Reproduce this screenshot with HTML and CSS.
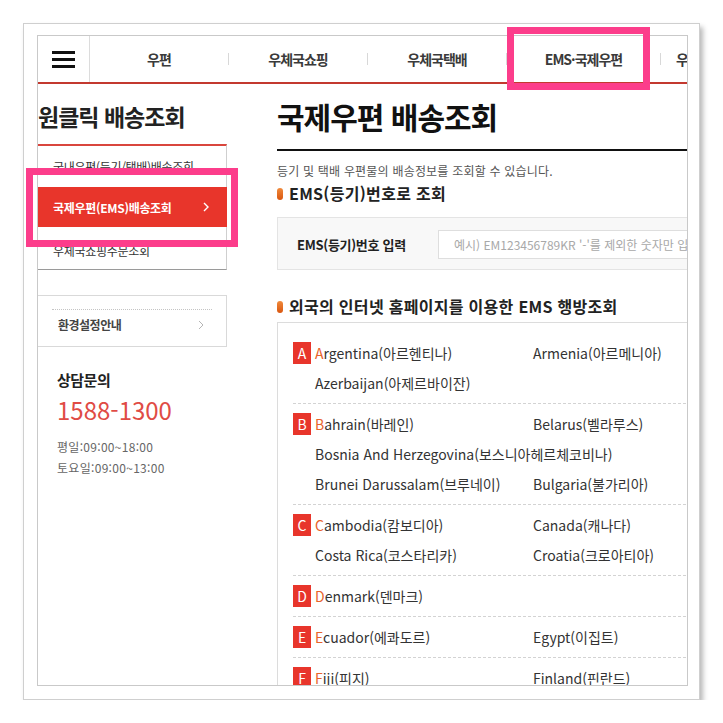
FILE: index.html
```html
<!DOCTYPE html>
<html lang="ko">
<head>
    <meta charset="UTF-8">
    <meta name="viewport" content="width=device-width, initial-scale=1.0">
    <title>국제우편 배송조회</title>
    <link rel="stylesheet" href="styles.css">
</head>
<body>
    <div class="frame">
        <div class="shot">
            <div class="gnb">
                <div class="menu-btn"><span></span><span></span><span></span></div>
                <a class="gnb-item">우편</a>
                <span class="sep"></span>
                <a class="gnb-item">우체국쇼핑</a>
                <span class="sep"></span>
                <a class="gnb-item">우체국택배</a>
                <span class="sep"></span>
                <a class="gnb-item wide">EMS·국제우편</a>
                <span class="sep"></span>
                <a class="gnb-item last">우체국금융</a>
            </div>

            <div class="content">
                <aside class="lnb">
                    <h2 class="lnb-title">원클릭 배송조회</h2>
                    <ul class="lnb-menu">
                        <li class="first">국내우편(등기/택배)배송조회</li>
                        <li class="on">국제우편(EMS)배송조회
                            <svg width="6" height="10" viewBox="0 0 6 10"><path d="M1 1l4 4-4 4" fill="none" stroke="#fff" stroke-width="1.4"/></svg>
                        </li>
                        <li class="third">우체국쇼핑주문조회</li>
                    </ul>

                    <div class="setting-box">
                        <div class="setting-link">환경설정안내
                            <svg width="6" height="10" viewBox="0 0 6 10"><path d="M1 1l4 4-4 4" fill="none" stroke="#b5b5b5" stroke-width="1"/></svg>
                        </div>
                    </div>

                    <div class="call">
                        <p class="call-title">상담문의</p>
                        <p class="call-num">1588-1300</p>
                        <p class="call-time">평일:09:00~18:00</p>
                        <p class="call-time">토요일:09:00~13:00</p>
                    </div>
                </aside>

                <main class="main">
                    <h1 class="page-title">국제우편 배송조회</h1>
                    <p class="page-desc">등기 및 택배 우편물의 배송정보를 조회할 수 있습니다.</p>

                    <h3 class="sub-title">EMS(등기)번호로 조회</h3>
                    <div class="search-box">
                        <label class="search-label" for="emsNo">EMS(등기)번호 입력</label>
                        <input type="text" id="emsNo" class="search-input" placeholder="예시) EM123456789KR '-'를 제외한 숫자만 입력하세요">
                    </div>

                    <h3 class="sub-title second">외국의 인터넷 홈페이지를 이용한 EMS 행방조회</h3>
                    <div class="country-list">
                        <div class="group">
                            <span class="letter">A</span>
                            <div class="names">
                                <span><em>A</em>rgentina(아르헨티나)</span>
                                <span>Armenia(아르메니아)</span>
                                <span>Azerbaijan(아제르바이잔)</span>
                            </div>
                        </div>
                        <div class="group">
                            <span class="letter">B</span>
                            <div class="names">
                                <span><em>B</em>ahrain(바레인)</span>
                                <span>Belarus(벨라루스)</span>
                                <span class="span2">Bosnia And Herzegovina(보스니아헤르체코비나)</span>
                                <span>Brunei Darussalam(브루네이)</span>
                                <span>Bulgaria(불가리아)</span>
                            </div>
                        </div>
                        <div class="group">
                            <span class="letter">C</span>
                            <div class="names">
                                <span><em>C</em>ambodia(캄보디아)</span>
                                <span>Canada(캐나다)</span>
                                <span>Costa Rica(코스타리카)</span>
                                <span>Croatia(크로아티아)</span>
                            </div>
                        </div>
                        <div class="group">
                            <span class="letter">D</span>
                            <div class="names">
                                <span><em>D</em>enmark(덴마크)</span>
                            </div>
                        </div>
                        <div class="group">
                            <span class="letter">E</span>
                            <div class="names">
                                <span><em>E</em>cuador(에콰도르)</span>
                                <span>Egypt(이집트)</span>
                            </div>
                        </div>
                        <div class="group">
                            <span class="letter">F</span>
                            <div class="names">
                                <span><em>F</em>iji(피지)</span>
                                <span>Finland(핀란드)</span>
                            </div>
                        </div>
                    </div>
                </main>
            </div>
        </div>

        <div class="mark mark-nav"></div>
        <div class="mark mark-side"></div>
    </div>
</body>
</html>
```

FILE: styles.css
```css
* {
    box-sizing: border-box;
}

body {
    margin: 0;
    background-color: #ffffff;
    font-family: "Noto Sans CJK KR", "Noto Sans", sans-serif;
    color: #333;
}

p, h1, h2, h3, ul {
    margin: 0;
    padding: 0;
}

ul {
    list-style: none;
}

/* picture frame */
.frame {
    position: relative;
    width: 677px;
    height: 677px;
    margin: 23px 0 0 23px;
    padding: 11px 0 0 13px;
    background-color: #fff;
    border: 1px solid #cfcfcf;
    box-shadow: 3px 4px 5px rgba(0, 0, 0, 0.28);
}

.shot {
    width: 651px;
    height: 651px;
    border: 1px solid #c9c9c9;
    overflow: hidden;
}

/* top navigation */
.gnb {
    display: flex;
    align-items: center;
    height: 48px;
    border-bottom: 2px solid #c3392f;
    white-space: nowrap;
}

.menu-btn {
    flex: 0 0 52px;
    display: flex;
    flex-direction: column;
    justify-content: center;
    gap: 4px;
    height: 46px;
    padding-left: 14px;
    border-right: 1px solid #dcdcdc;
}

.menu-btn span {
    display: block;
    width: 23px;
    height: 3px;
    background-color: #111;
}

.gnb-item {
    flex: 0 0 138px;
    text-align: center;
    font-size: 14px;
    font-weight: 700;
    letter-spacing: -1px;
    color: #3a3a3a;
}

.gnb-item.wide {
    flex-basis: 153px;
}

.gnb-item.last {
    flex: 0 0 auto;
    padding-left: 15px;
    text-align: left;
}

.sep {
    flex: 0 0 1px;
    height: 12px;
    background-color: #d8d8d8;
}

/* layout */
.content {
    display: flex;
    align-items: flex-start;
}

/* left menu */
.lnb {
    flex: 0 0 190px;
    margin-left: -1px;
}

.lnb-title {
    padding: 16px 0 0 1px;
    line-height: 32px;
    font-size: 23px;
    font-weight: 700;
    letter-spacing: -1px;
    color: #222;
}

.lnb-menu {
    margin-top: 12px;
    border-top: 2px solid #d9463d;
    border-left: 1px solid #cfcfcf;
    border-right: 1px solid #cfcfcf;
    border-bottom: 1px solid #9a9a9a;
}

.lnb-menu li {
    display: flex;
    align-items: center;
    justify-content: space-between;
    height: 40px;
    padding: 0 18px 0 15px;
    font-size: 12px;
    letter-spacing: -0.3px;
    color: #333;
    white-space: nowrap;
}

.lnb-menu li.first {
    height: 41px;
}

.lnb-menu li.third {
    height: 42px;
    padding-top: 4px;
}

.lnb-menu li.on {
    margin: 0 -1px;
    padding-left: 16px;
    background-color: #e8352b;
    color: #fff;
    font-weight: 700;
}

.setting-box {
    margin-top: 25px;
    padding: 13px 14px 8px;
    border: 1px solid #d9d9d9;
}

.setting-link {
    display: flex;
    align-items: center;
    justify-content: space-between;
    height: 29px;
    padding: 1px 8px 0 6px;
    border-top: 1px dotted #c4c4c4;
    font-size: 12px;
    font-weight: 700;
    letter-spacing: -0.5px;
    color: #444;
}

.call {
    padding: 23px 0 0 20px;
}

.call-title {
    line-height: 20px;
    font-size: 15px;
    font-weight: 700;
    letter-spacing: -0.5px;
    color: #222;
}

.call-num {
    margin: 5px 0 11px;
    line-height: 30px;
    font-size: 24px;
    color: #e04b45;
}

.call-time {
    line-height: 21px;
    font-size: 12px;
    letter-spacing: 0.3px;
    color: #666;
}

/* main column */
.main {
    flex: 0 0 470px;
    margin-left: 50px;
}

.page-title {
    padding-top: 12px;
    padding-bottom: 13px;
    line-height: 40px;
    font-size: 30px;
    font-weight: 700;
    letter-spacing: -1px;
    color: #111;
    border-bottom: 2px solid #111;
}

.page-desc {
    margin-top: 11px;
    line-height: 18px;
    font-size: 12px;
    letter-spacing: 0.2px;
    color: #555;
}

.sub-title {
    display: flex;
    align-items: center;
    margin-top: 2px;
    line-height: 22px;
    font-size: 16px;
    font-weight: 700;
    letter-spacing: 0.3px;
    color: #222;
}

.sub-title::before {
    content: "";
    width: 6px;
    height: 12px;
    margin: 2px 6px 0 0;
    border-radius: 3px;
    background: linear-gradient(#f08a3c, #d9560f);
}

.sub-title.second {
    margin-top: 25px;
}

.search-box {
    display: flex;
    align-items: center;
    margin-top: 13px;
    padding: 12px 0 10px 19px;
    background-color: #f8f8f8;
    border: 1px solid #e4e4e4;
}

.search-label {
    flex: 0 0 141px;
    font-size: 13px;
    font-weight: 700;
    letter-spacing: -0.3px;
    color: #222;
}

.search-input {
    flex: 1;
    height: 29px;
    padding: 0 15px;
    border: 1px solid #dedede;
    background-color: #fff;
    font-family: "Noto Sans CJK KR", "Noto Sans", sans-serif;
    font-size: 12px;
    outline: none;
}

.search-input::placeholder {
    color: #a8a8a8;
}

/* country list */
.country-list {
    margin-top: 5px;
    padding-top: 10px;
    border: 1px solid #dcdcdc;
}

.group {
    display: flex;
    align-items: flex-start;
    margin: 0 0 0 15px;
    padding: 5px 0;
    border-bottom: 1px dashed #d3d3d3;
}

.letter {
    flex: 0 0 18px;
    height: 22px;
    margin: 4px 4px 0 0;
    background-color: #e8352b;
    color: #fff;
    font-size: 14px;
    line-height: 22px;
    text-align: center;
}

.names {
    display: grid;
    grid-template-columns: 218px auto;
    grid-auto-rows: 30px;
    align-items: center;
    white-space: nowrap;
    font-size: 14px;
    letter-spacing: 0;
    color: #333;
}

.names .span2 {
    grid-column: span 2;
}

.names em {
    font-style: normal;
    color: #e8632a;
}

/* pink highlight boxes */
.mark {
    position: absolute;
    border: 7px solid #fc3d8b;
}

.mark-nav {
    left: 483px;
    top: 3px;
    width: 143px;
    height: 63px;
}

.mark-side {
    left: 2px;
    top: 144px;
    width: 212px;
    height: 79px;
}
```
